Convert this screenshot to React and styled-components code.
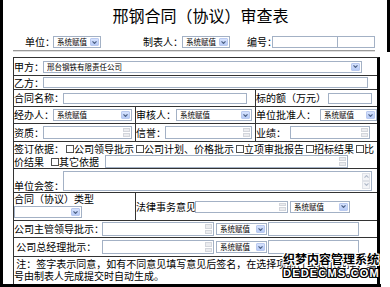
import React from "react";
import styled, { createGlobalStyle } from "styled-components";

const GlobalStyle = createGlobalStyle`
  html, body {
    margin: 0;
    padding: 0;
    background: #fff;
  }
  body {
    font-family: "Noto Sans CJK SC", "Noto Sans", sans-serif;
    color: #000;
  }
`;

const Page = styled.div`
  position: relative;
  width: 381px;
  height: 287px;
  box-sizing: border-box;
  border-left: 3px solid #000;
  border-bottom: 3px solid #000;
`;

const Header = styled.div`
  width: 387px;
  height: 52px;
  box-sizing: border-box;
  border-right: 3px solid #000;
  padding-top: 5px;
`;

const Title = styled.h1`
  margin: 0;
  padding-left: 11px;
  text-align: center;
  font-size: 16px;
  line-height: 20px;
  font-weight: normal;
`;

const MetaRow = styled.div`
  display: flex;
  align-items: center;
  height: 12px;
  margin-top: 11px;
  padding-left: 22px;
`;

const Rule = styled.div`
  margin: 2px 0 0 10px;
  width: 362px;
  border-top: 1px solid #9a9a9a;
  border-bottom: 1px solid #dedede;
`;

const Table = styled.div`
  margin: 5px 0 0 10px;
  width: 367px;
  box-sizing: border-box;
  border-top: 1px solid #333;
  border-left: 1px solid #333;
  border-right: 3px solid #000;
  font-size: 10px;
  line-height: 12px;
`;

const Row = styled.div`
  display: flex;
  height: ${(p) => p.h}px;
  box-sizing: border-box;
  border-bottom: ${(p) => (p.last ? "none" : "1px solid #333")};
`;

const Cell = styled.div`
  flex: none;
  width: ${(p) => p.w}px;
  box-sizing: border-box;
  display: flex;
  flex-direction: ${(p) => (p.column ? "column" : "row")};
  align-items: ${(p) => (p.column ? "flex-start" : "center")};
  border-left: ${(p) => (p.first ? "none" : "1px solid #333")};
`;

const Label = styled.span`
  flex: none;
  width: ${(p) => p.w}px;
  margin-left: ${(p) => p.ml || 0}px;
  white-space: nowrap;
  font-size: 10px;
  line-height: 12px;
  align-self: ${(p) => p.self || "auto"};
`;

const SelectBox = styled.div`
  flex: none;
  display: flex;
  align-items: center;
  width: ${(p) => p.w}px;
  height: 12px;
  margin-left: ${(p) => p.ml || 0}px;
  margin-top: ${(p) => p.mt || 0}px;
  box-sizing: border-box;
  border: 1px solid #a3b1c5;
  background: #fff;
  padding: 0 1px 0 3px;
`;

const SelectText = styled.span`
  flex: 1;
  overflow: hidden;
  white-space: nowrap;
  font-size: 7.5px;
  line-height: 10px;
`;

const ArrowBtn = styled.span`
  flex: none;
  display: flex;
  align-items: center;
  justify-content: center;
  width: 9px;
  height: 8px;
  box-sizing: border-box;
  border: 1px solid #b9c9ef;
  border-radius: 1px;
  background: linear-gradient(#d6e2fd, #b7cbf7);
`;

const Field = styled.div`
  flex: none;
  display: flex;
  justify-content: flex-end;
  width: ${(p) => p.w}px;
  height: ${(p) => p.h || 11}px;
  margin-left: ${(p) => p.ml || 0}px;
  box-sizing: border-box;
  border: 1px solid #a3b1c5;
  background: #fff;
  padding: 1px;
`;

const SpinStrip = styled.span`
  display: flex;
  flex-direction: column;
  gap: 1px;
  width: 7px;
`;

const SpinBtn = styled.span`
  flex: 1;
  box-sizing: border-box;
  border: 1px solid #d3d6dc;
  background: #ebecef;
`;

const ScrollStrip = styled.span`
  display: flex;
  flex-direction: column;
  justify-content: space-between;
  width: 8px;
`;

const ScrollBtn = styled.span`
  display: flex;
  align-items: center;
  justify-content: center;
  height: 8px;
  box-sizing: border-box;
  border: 1px solid #dfe2e8;
  background: #f3f4f7;
  transform: ${(p) => (p.up ? "scaleY(-1)" : "none")};
`;

const Lines = styled.div`
  display: flex;
  flex-direction: column;
  padding-top: 1px;
`;

const Line = styled.div`
  display: flex;
  align-items: center;
  height: ${(p) => p.h || 12}px;
  white-space: nowrap;
`;

const CheckItem = styled.span`
  flex: none;
  display: inline-flex;
  align-items: center;
  margin-left: ${(p) => p.ml ?? 2}px;
`;

const Box = styled.span`
  flex: none;
  width: 8px;
  height: 8px;
  box-sizing: border-box;
  border: 1px solid #505050;
  background: #fff;
`;

const Watermark = styled.div`
  position: absolute;
  left: 280px;
  top: 252px;
  pointer-events: none;
`;

const MarkCn = styled.div`
  font-size: 12px;
  line-height: 14px;
  font-weight: bold;
  color: #000;
  white-space: nowrap;
  text-shadow: 1px 0 #fff, -1px 0 #fff, 0 1px #fff, 0 -1px #fff,
    1px 1px #fff, -1px -1px #fff, 1px -1px #fff, -1px 1px #fff;
`;

const MarkEn = styled.div`
  font-family: "Liberation Sans", Arial, sans-serif;
  font-size: 11px;
  line-height: 14px;
  font-weight: bold;
  letter-spacing: 1.2px;
  color: #fff;
  white-space: nowrap;
  text-shadow: 1px 0 #000, -1px 0 #000, 0 1px #000, 0 -1px #000,
    1px 1px #000, -1px -1px #000, 1px -1px #000, -1px 1px #000;
`;

const Chevron = ({ color = "#4d6185" }) => (
  <svg width="5" height="3" viewBox="0 0 5 3">
    <polyline
      points="0.5,0.4 2.5,2.4 4.5,0.4"
      fill="none"
      stroke={color}
      strokeWidth="1.2"
    />
  </svg>
);

const Select = ({ w, ml, mt, text }) => (
  <SelectBox w={w} ml={ml} mt={mt}>
    <SelectText>{text}</SelectText>
    <ArrowBtn>
      <Chevron />
    </ArrowBtn>
  </SelectBox>
);

const Spin = ({ w, h = 13, ml }) => (
  <Field w={w} h={h} ml={ml}>
    <SpinStrip>
      <SpinBtn />
      <SpinBtn />
    </SpinStrip>
  </Field>
);

const Check = ({ ml, children }) => (
  <CheckItem ml={ml}>
    <Box />
    {children}
  </CheckItem>
);

const AUTO = "系统赋值";

const App = () => {
  return (
    <>
      <GlobalStyle />
      <Page>
        <Header>
          <Title>邢钢合同（协议）审查表</Title>
          <MetaRow>
            <Label w={28}>单位：</Label>
            <Select w={48} text={AUTO} />
            <Label w={39} ml={42}>制表人：</Label>
            <Select w={48} text={AUTO} />
            <Label w={25} ml={17}>编号：</Label>
            <Field w={66} h={12} />
            <Field w={38} h={12} ml={-1} />
          </MetaRow>
          <Rule />
        </Header>

        <Table>
          <Row h={18}>
            <Cell w={363} first>
              <Label w={29}>甲方：</Label>
              <Select w={319} text="邢台钢铁有限责任公司" />
            </Cell>
          </Row>
          <Row h={14}>
            <Cell w={363} first>
              <Label w={29}>乙方：</Label>
              <Field w={325} h={11} />
            </Cell>
          </Row>
          <Row h={17}>
            <Cell w={241} first>
              <Label w={49}>合同名称：</Label>
              <Field w={184} h={11} />
            </Cell>
            <Cell w={122}>
              <Label w={72}>标的额（万元）</Label>
              <Field w={44} h={11} />
            </Cell>
          </Row>
          <Row h={17}>
            <Cell w={121} first>
              <Label w={39}>经办人：</Label>
              <Select w={79} text={AUTO} />
            </Cell>
            <Cell w={120}>
              <Label w={40}>审核人：</Label>
              <Select w={76} text={AUTO} />
            </Cell>
            <Cell w={122}>
              <Label w={64}>单位批准人：</Label>
              <Select w={57} text={AUTO} />
            </Cell>
          </Row>
          <Row h={18}>
            <Cell w={121} first>
              <Label w={29}>资质：</Label>
              <Spin w={89} />
            </Cell>
            <Cell w={120}>
              <Label w={29}>信誉：</Label>
              <Spin w={87} />
            </Cell>
            <Cell w={122}>
              <Label w={34}>业绩：</Label>
              <Spin w={80} />
            </Cell>
          </Row>
          <Row h={27}>
            <Cell w={363} first column>
              <Lines>
                <Line>
                  <Label w={50}>签订依据：</Label>
                  <Check>公司领导批示</Check>
                  <Check>公司计划、价格批示</Check>
                  <Check>立项审批报告</Check>
                  <Check>招标结果</Check>
                  <Check>比</Check>
                </Line>
                <Line h={13}>
                  价结果
                  <Check ml={7}>其它依据</Check>
                  <Spin w={243} ml={6} />
                </Line>
              </Lines>
            </Cell>
          </Row>
          <Row h={24}>
            <Cell w={363} first>
              <Label w={49} self="flex-end">
                单位会签：
              </Label>
              <Field w={309} h={20}>
                <ScrollStrip>
                  <ScrollBtn up>
                    <Chevron color="#b3bccb" />
                  </ScrollBtn>
                  <ScrollBtn>
                    <Chevron color="#b3bccb" />
                  </ScrollBtn>
                </ScrollStrip>
              </Field>
            </Cell>
          </Row>
          <Row h={28}>
            <Cell w={121} first column>
              <Label w={80}>合同（协议）类型</Label>
              <Select w={68} mt={1} text="" />
            </Cell>
            <Cell w={242}>
              <Label w={59}>法律事务意见</Label>
              <Spin w={93} h={12} />
              <Select w={60} ml={2} text={AUTO} />
            </Cell>
          </Row>
          <Row h={17}>
            <Cell w={363} first>
              <Label w={88}>公司主管领导批示：</Label>
              <Spin w={112} h={14} />
              <Select w={51} ml={2} text={AUTO} />
              <Field w={91} h={14} ml={1} />
            </Cell>
          </Row>
          <Row h={19}>
            <Cell w={363} first>
              <Label w={88}>&nbsp;公司总经理批示：</Label>
              <Spin w={112} h={14} />
              <Select w={51} ml={2} text={AUTO} />
              <Field w={91} h={14} ml={1} />
            </Cell>
          </Row>
          <Row h={27} last>
            <Cell w={363} first column>
              <Lines>
                <Line>
                  &nbsp;注：签字表示同意，如有不同意见填写意见后签名，在选择项前打勾表示选择，编
                </Line>
                <Line>号由制表人完成提交时自动生成。</Line>
              </Lines>
            </Cell>
          </Row>
        </Table>

        <Watermark>
          <MarkCn>织梦内容管理系统</MarkCn>
          <MarkEn>DEDECMS.COM</MarkEn>
        </Watermark>
      </Page>
    </>
  );
};

export default App;
